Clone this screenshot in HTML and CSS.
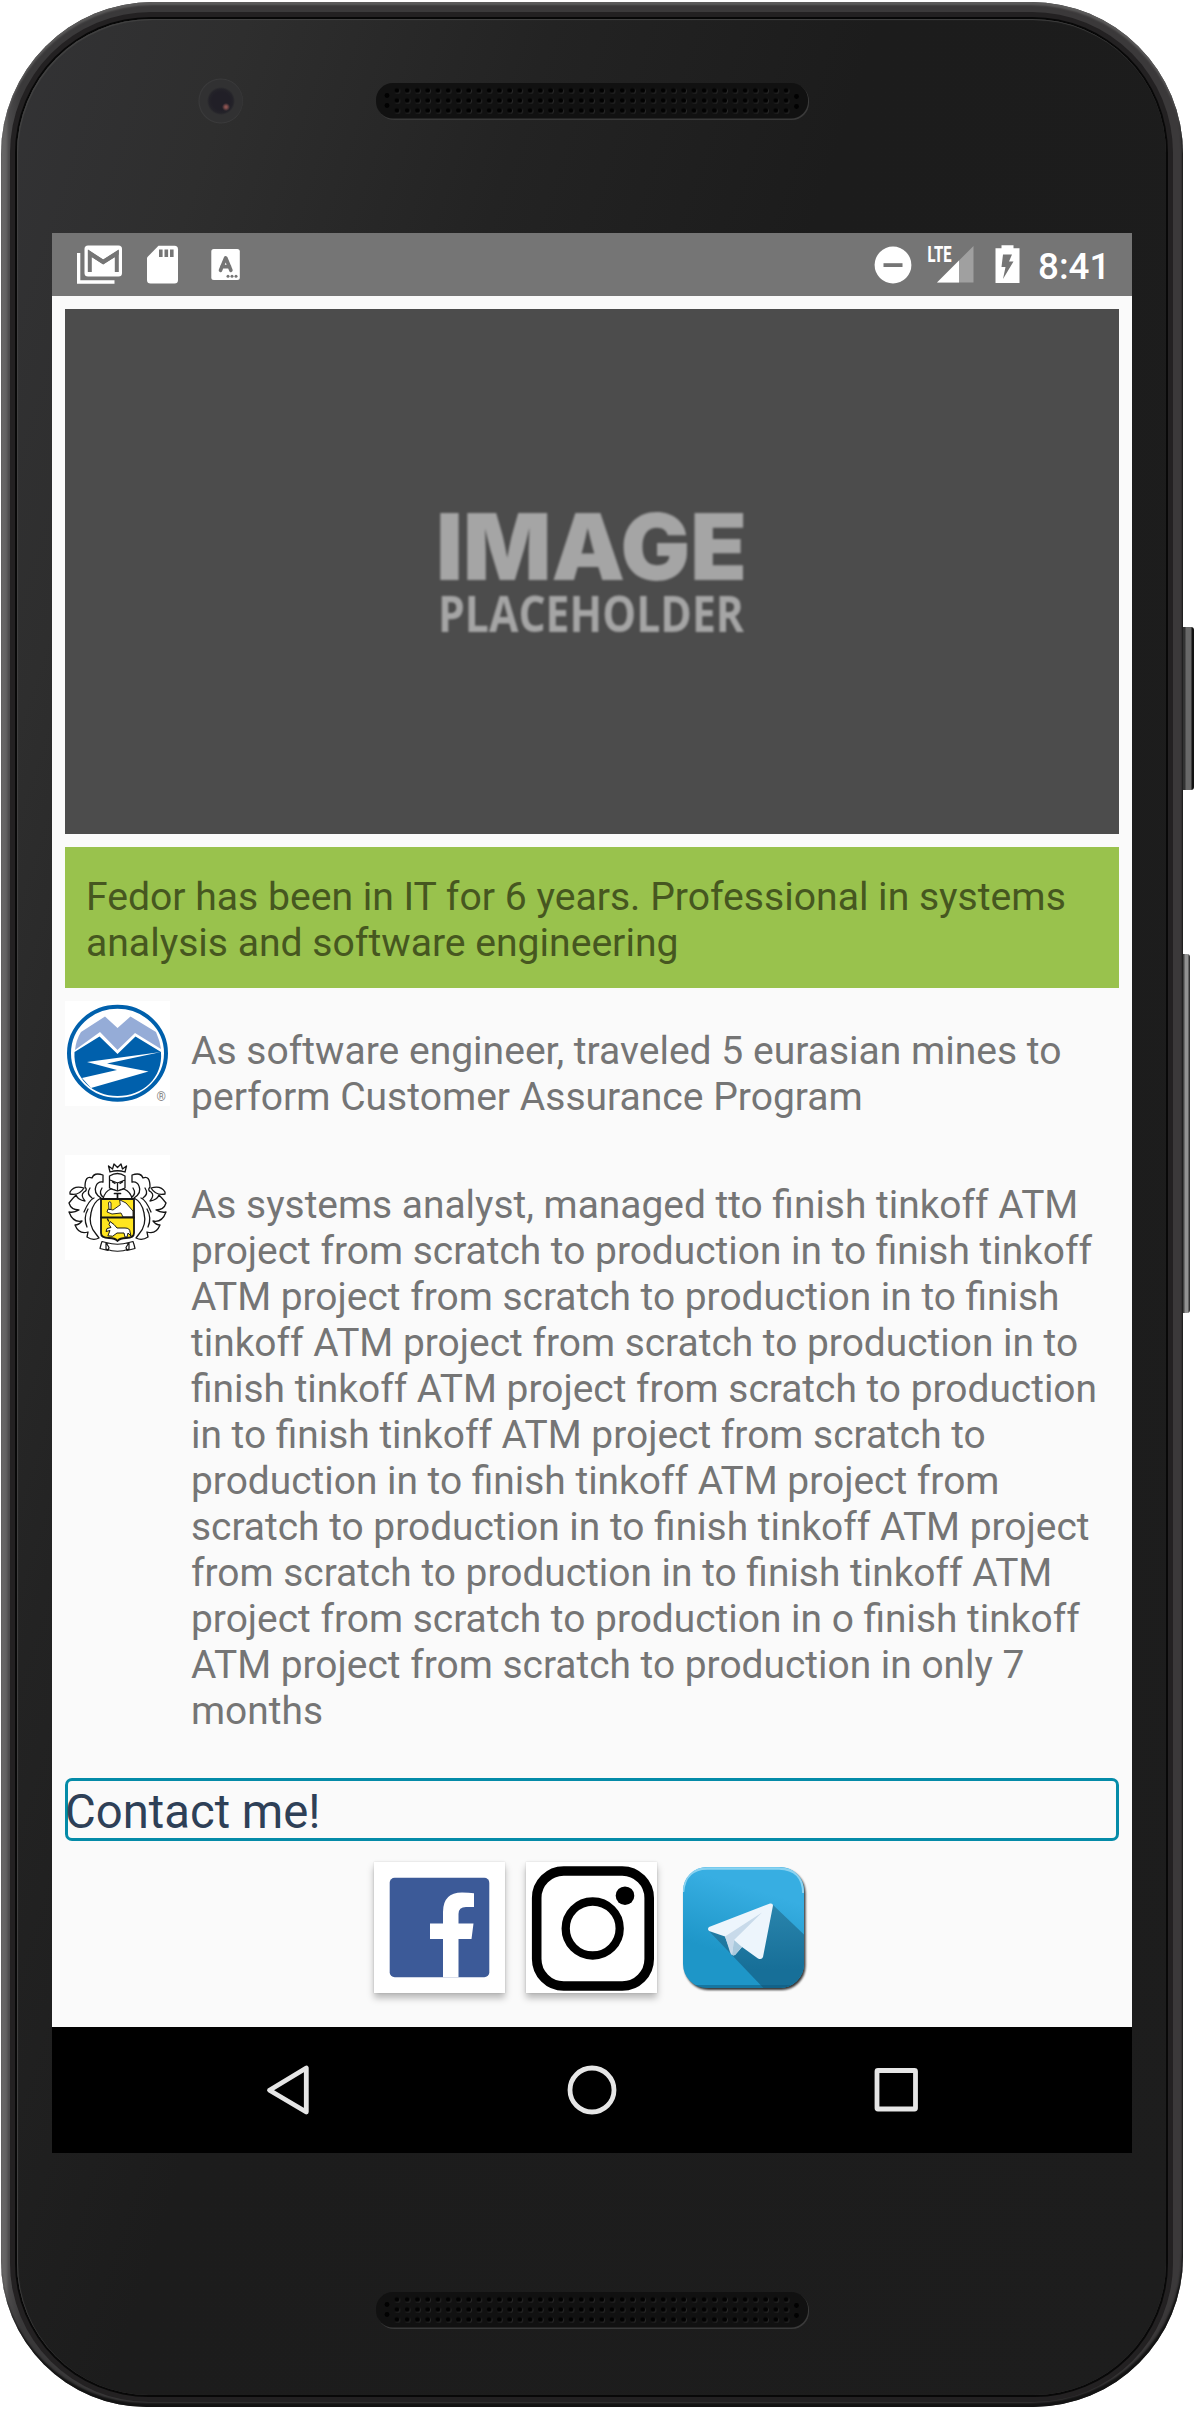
FILE: index.html
```html
<!DOCTYPE html>
<html lang="en">
<head>
<meta charset="utf-8">
<title>Fedor – profile</title>
<link rel="stylesheet" href="styles.css">
</head>
<body>
<svg class="defs" width="0" height="0" aria-hidden="true">
  <defs>
    <pattern id="holes" x="15.9" y="2.6" width="10.24" height="10" patternUnits="userSpaceOnUse">
      <circle cx="5.6" cy="5.4" r="2.7" fill="#2c2c2c"/>
      <circle cx="5.1" cy="4.9" r="2.4" fill="#020202"/>
    </pattern>
    <symbol id="grille" viewBox="0 0 433 37">
      <rect x="1" y="1" width="432" height="36" rx="17" fill="#3a3a3a"/>
      <rect x="0" y="0" width="432" height="35.5" rx="17" fill="#111"/>
      <rect x="15.9" y="2.6" width="399.4" height="30" fill="url(#holes)"/>
      <g fill="#020202"><circle cx="11" cy="12.5" r="2.4"/><circle cx="11" cy="22.5" r="2.4"/><circle cx="420.5" cy="13.5" r="2.4"/><circle cx="420.5" cy="23.5" r="2.4"/></g>
    </symbol>
  </defs>
</svg>
<div class="phone">
  <span class="key key-power"></span>
  <span class="key key-volume"></span>
  <div class="glass">
    <header class="bezel bezel-top">
      <span class="camera"></span>
      <svg class="speaker"><use href="#grille"/></svg>
    </header>

    <div class="screen">
      <div class="statusbar">
        <div class="notifications">
          <svg width="46" height="40" viewBox="77 245 46 40">
            <path d="M78.5 253v29h36" fill="none" stroke="#fff" stroke-width="3.6"/>
            <rect x="84.500" y="245.500" width="37.500" height="31" rx="3.500" fill="#fff"/>
            <path d="M89.800 272v-18.500L103.200 262l13.600-8.500V272" fill="none" stroke="#757575" stroke-width="4"/>
            <path d="M88 249.500l15.200 10 15.500-10v5L103.200 264.500 88 254.500z" fill="#757575"/>
          </svg>
          <svg width="32" height="40" viewBox="147 245 32 40">
            <path d="M158.500 245.700H174.500a3.500 3.500 0 0 1 3.500 3.500V280a3.500 3.500 0 0 1-3.500 3.500H150.500A3.500 3.500 0 0 1 147 280V257.500z" fill="#fff"/>
            <path d="M159 249.500h3.600v7.500H159zM164.500 249.500h3.600v7.500h-3.600zM170 249.500h3.600v7.500H170z" fill="#757575"/>
          </svg>
          <svg width="30" height="40" viewBox="211 245 30 40">
            <rect x="211.300" y="249" width="28.500" height="31" rx="2.500" fill="#fff"/>
            <path d="M220.500 270.300l5.200-12.500 5.200 12.500M221.800 266.600h7.800" fill="none" stroke="#757575" stroke-width="3.600" stroke-linecap="round" stroke-linejoin="round"/>
            <g fill="#757575"><circle cx="228" cy="276.300" r="1.500"/><circle cx="232" cy="276.300" r="1.500"/><circle cx="236" cy="276.300" r="1.500"/></g>
          </svg>
        </div>
        <div class="system">
          <svg width="38" height="40" viewBox="874 245 38 40">
            <circle cx="893" cy="265" r="18.400" fill="#fff"/><rect x="883.500" y="263.200" width="19" height="3.800" fill="#757575"/>
          </svg>
          <svg class="signal" width="48" height="40" viewBox="927 245 48 40">
            <path d="M973.500 246v36.500H937z" fill="#a0a0a0"/><path d="M959 260.500v22H937z" fill="#fff"/>
            <text class="lte" x="927.500" y="262" textLength="24" lengthAdjust="spacingAndGlyphs">LTE</text>
          </svg>
          <svg width="25" height="40" viewBox="994.500 245 25 40">
            <path d="M1001 245.300h12v3h6V283h-24v-34.700h6z" fill="#fff"/>
            <path d="M1002.500 254.500h9l-3 7h4.500l-10.500 17.500 2.500-12h-4z" fill="#757575"/>
          </svg>
          <time class="clock">8:41</time>
        </div>
      </div>

      <main class="page">
        <svg class="hero" viewBox="0 0 1054 525" role="img">
          <text class="hero-title" x="371" y="270.500" textLength="311" lengthAdjust="spacingAndGlyphs">IMAGE</text>
          <text class="hero-sub" x="373" y="323" textLength="306" lengthAdjust="spacingAndGlyphs">PLACEHOLDER</text>
        </svg>

        <p class="summary">Fedor has been in IT for 6 years. Professional in systems<br>analysis and software engineering</p>

        <section class="job job-first">
          <svg class="logo" viewBox="0 0 105 105">
            <rect width="105" height="105" fill="#fff"/>
            <ellipse cx="52.500" cy="52.300" rx="48.500" ry="46.500" fill="#fff" stroke="#0060ac" stroke-width="4"/>
            <path d="M10 49Q11 39 16 31L40 15.500 52.500 27 65.500 15.500 91 31Q95 40 96 48L70 32 52.500 49 35 31z" fill="#95acd7"/>
            <path d="M9.500 51L34.500 35.500 52.500 53 70.500 35.500 96 51C98 77 78 95 52.500 95 28 95 8 77 9.500 51z" fill="#0060ac"/>
            <path d="M96 51L42 62.500 83.500 70.500 26 87 17 77 52 69 22 61z" fill="#fff"/>
            <text class="reg" x="91.500" y="99.500">®</text>
          </svg>
          <p>As software engineer, traveled 5 eurasian mines to<br>perform Customer Assurance Program</p>
        </section>

        <section class="job job-second">
          <svg class="logo" viewBox="0 0 105 105">
            <rect width="105" height="105" fill="#fff"/>
            <g fill="#fff" stroke="#151515" stroke-width="1.300" stroke-linejoin="round" stroke-linecap="round">
              <g id="leaf">
                <path d="M38 20Q29 17 27 23Q20 20 20 32Q23 35 19 37Q15 40 20 46Q13 45 11 40Q8 43 4 48Q6 55 14 55Q9 58 4 57Q8 68 17 66Q14 70 10 70Q14 80 23 77L22 82Q28 86 34 83L31 79Q23 70 26 58Q28 47 36 43Q28 38 31 31Q33 26 38 27z"/>
                <path d="M5 37Q9 30 19 33Q14 41 5 39z"/>
                <path d="M19 57q5-12 10-14M22 72q-4-9 1-18M25 33q-4 6 2 10M37 33Q33 39 39 43" fill="none"/>
              </g>
              <use href="#leaf" transform="matrix(-1 0 0 1 105 0)"/>
              <path d="M45 17L43.500 11l4 3L49 9l3.500 3.500L56 9l1.500 5 4-3L60 17Q52.500 14.500 45 17z"/>
              <path d="M44.500 21Q52.500 16 60 21V33L52.500 36 44.500 33zM45 25l7.500 3 7.500-3M52.500 28v8M47.500 27l2.500 1.500M55 28.500l2.500-1.500"/>
              <path d="M38 44Q40 36 46 34L52.500 36 59 34Q66 37 67 44z"/>
              <path d="M49.500 38.500h6M52.500 38.500v5" stroke-width="1.700"/>
              <path d="M36 44H69V78Q69 83 61 83Q55 83 52.500 86Q50 83 44 83Q36 83 36 78z" fill="#ffe51f" stroke-width="1.800"/>
              <path d="M55 45l6 3 7 8v6H58l-2-4-9 1-5-2 1-3 5 1 7-5z" stroke-width=".9"/>
              <path d="M44 54L43.500 47.500Q45.500 45.500 46 48V54z" stroke-width=".9"/>
              <path d="M36 62.500H69" stroke-width="1.800"/>
              <path d="M43 80.500l2-5-4 1 1-3 4-1-2-3 1-3 4 3 3 3.500h8q5 0 5 4l1 4-3-3-1 4h-2l-1-4h-7l-4 3z" stroke-width="1"/>
              <path d="M43.500 66l-1-2" fill="none"/>
              <path d="M41 87.500l-4-1-1 3-1 4 8 2 1-3zM64 87.500l4-1 1 3 1 4-8 2-1-3zM41 87.500Q52.500 91 64 87.500V94Q52.500 98.500 41 94z" stroke-width="1.200"/>
            </g>
          </svg>
          <p>As systems analyst, managed tto finish tinkoff ATM<br>project from scratch to production in to finish tinkoff<br>ATM project from scratch to production in to finish<br>tinkoff ATM project from scratch to production in to<br>finish tinkoff ATM project from scratch to production<br>in to finish tinkoff ATM project from scratch to<br>production in to finish tinkoff ATM project from<br>scratch to production in to finish tinkoff ATM project<br>from scratch to production in to finish tinkoff ATM<br>project from scratch to production in o finish tinkoff<br>ATM project from scratch to production in only 7<br>months</p>
        </section>

        <h2 class="contact">Contact me!</h2>

        <nav class="social">
          <a class="tile"><svg width="131" height="131" viewBox="0 0 131 131">
            <rect x="15.700" y="15.700" width="99.600" height="99.600" rx="5" fill="#3c5a98"/>
            <path d="M69 115.300V77H56V61.500H69V50Q69 30.500 88 30.500Q95 30.500 100 31.300V45H92Q84.500 45 84.500 52V61.500H99.500L97.500 77H84.500V115.300z" fill="#fff"/>
          </svg></a>
          <a class="tile"><svg width="131" height="131" viewBox="0 0 131 131">
            <rect x="10.700" y="9" width="112.500" height="115" rx="27" fill="#fff" stroke="#000" stroke-width="9.600"/>
            <circle cx="66.700" cy="66.500" r="27" fill="none" stroke="#000" stroke-width="8.300"/>
            <circle cx="99" cy="33.700" r="9.300"/>
          </svg></a>
          <a class="tile tile-bare"><svg width="131" height="131" viewBox="0 0 131 131">
            <defs>
              <linearGradient id="sky" x1=".7" y1="0" x2=".4" y2="1"><stop offset=".2" stop-color="#37aee2"/><stop offset=".75" stop-color="#1e96c8"/></linearGradient>
              <linearGradient id="shade" x1="0" y1="0" x2="0" y2="1"><stop offset="0" stop-color="#2a85ad"/><stop offset=".7" stop-color="#176f98"/></linearGradient>
              <clipPath id="badge"><rect x="5" y="5" width="121" height="121" rx="24"/></clipPath>
            </defs>
            <rect class="badge-shadow" x="6.500" y="7" width="121" height="121" rx="24" fill="#333"/>
            <g clip-path="url(#badge)">
              <rect x="5" y="5" width="121" height="121" fill="url(#sky)"/>
              <path d="M30 68L94 42 135 81V135H94z" fill="url(#shade)"/>
              <path d="M5 123h121v4H5z" fill="#0d5579" opacity=".5"/>
              <path d="M5 30Q7 6 30 6.500H101Q125 7 125.300 31" fill="none" stroke="#8bd3f1" stroke-width="2.400"/>
            </g>
            <path d="M31 65Q29 67 31 69L47 74.500 54 92.500Q55 94 57 93L64 85 80 96.500Q84 98 85 95L95 43.500Q95 41 92 41.500z" fill="#edf5fc"/>
            <path d="M47 74.500L84 50.500 56 78 54 93Q53 93 52 90z" fill="#c8daea"/>
            <path d="M56 78L64 85 57 93H54z" fill="#a9c9dd"/>
          </svg></a>
        </nav>
      </main>

      <div class="navbar">
        <svg width="50" height="56" viewBox="262 2062 50 56"><path d="M306.300 2068V2112L269.500 2090.300z"/></svg>
        <svg width="56" height="56" viewBox="564 2062 56 56"><circle cx="592" cy="2090" r="22"/></svg>
        <svg width="50" height="56" viewBox="871 2062 50 56"><rect x="877" y="2070.500" width="38.500" height="38.500" rx="1"/></svg>
      </div>
    </div>

    <footer class="bezel bezel-bottom">
      <svg class="speaker"><use href="#grille"/></svg>
    </footer>
  </div>
</div>
</body>
</html>
```
FILE: styles.css
```css
* { box-sizing: border-box; }
body { margin: 0; background: #fff; font-family: Roboto, "Noto Sans", sans-serif; }
p, h2 { margin: 0; font-weight: 400; }
.defs { position: absolute; }
svg { display: block; flex: none; }

/* device body */
.phone {
  position: relative;
  width: 1182px;
  height: 2405px;
  margin: 2px 0 2px 1px;
  padding: 17px 17px 12px 16px;
  border-radius: 152px 152px 150px 146px;
  background: linear-gradient(90deg, #6b6a6a 0, #626161 5px, #4a494a 8px, #3a393a 20px, #3b393a 100%);
  box-shadow: inset -1px -4px 2px #131313, inset 0 3px 2px #5c5b5b;
}
.glass {
  width: 1149px;
  height: 2376px;
  border-radius: 134px 134px 132px 132px;
  background: linear-gradient(108deg, #333335 0, #2e2e2e 12%, #232323 28%, #1c1c1c 45%, #1d1d1d 100%);
  box-shadow: 0 0 0 2px #080808, 0 0 0 7px #232122, inset 1px 1px 1px #434343;
}
.key { position: absolute; left: 1182px; border-radius: 0 3px 3px 0; }
.key-power { top: 625px; width: 11px; height: 163px; background: linear-gradient(90deg, #333 0 2px, #686868 3px 8px, #111 9px); }
.key-volume { top: 952px; width: 7px; height: 359px; background: linear-gradient(90deg, #444 0 1px, #929292 2px 5px, #333 6px); }

/* bezels */
.bezel { display: flex; justify-content: center; }
.bezel-top { height: 214px; padding: 64px 0 0; }
.bezel-bottom { height: 242px; padding-top: 139px; }
.speaker { width: 433px; height: 37px; margin-left: 1px; }
.camera {
  width: 46px; height: 46px; margin: -5px 132px 0 -178px; border-radius: 50%;
  background: radial-gradient(circle at 29px 29px, #8a5250 0 1px, transparent 4px),
    radial-gradient(circle at 24px 23px, #211f27 0 9px, #242329 12px, #313132 14px 21px, #3a3a3b 22px, transparent 23px);
}

/* screen */
.screen { display: flex; flex-direction: column; width: 1080px; height: 1920px; margin-left: 35px; background: #fafafa; }
.statusbar { display: flex; justify-content: space-between; height: 63px; padding: 12px 26px 0 25px; background: #757575; color: #fff; }
.notifications { display: flex; }
.notifications svg + svg { margin-left: 24px; }
.notifications svg + svg + svg { margin-left: 32px; }
.system { display: flex; gap: 15px; }
.system svg:nth-child(3) { margin-left: 5px; }
.signal { overflow: visible; }
.lte { font: 800 22px Roboto, sans-serif; fill: #fff; }
.clock { width: 68px; margin-left: 3px; font-size: 36.75px; font-weight: 500; line-height: 43px; }

.page { flex: 1; display: flex; flex-direction: column; padding: 13px 13px 0; }
.hero { width: 1054px; height: 525px; background: #4c4c4c; }
.hero text { fill: #a5a5a5; filter: blur(.8px); }
.hero-title { font: 900 92px Inter, sans-serif; }
.hero-sub { font: 700 51px "Open Sans", sans-serif; }
.summary {
  height: 141px; margin-top: 13px; padding: 27px 21px 0;
  background: #99c24d; color: #465720;
  font-size: 39.12px; line-height: 46px; white-space: nowrap;
}
.job { display: flex; gap: 21px; color: #757575; line-height: 46px; white-space: nowrap; }
.job p { padding-top: 27px; }
.job-first { height: 154px; margin-top: 13px; font-size: 39.05px; }
.job-second { height: 623px; font-size: 38.9px; }
.logo { width: 105px; height: 105px; }
.reg { font-size: 12px; fill: #888; }
.contact {
  height: 63px; border: 3px solid #048ba8; border-radius: 7px;
  color: #2e4057; font-size: 47.25px; line-height: 63px; text-indent: -3px;
}
.social { display: flex; justify-content: center; gap: 21px; margin-top: 21px; padding-right: 2px; }
.tile { width: 131px; height: 131px; background: #fff; box-shadow: 0 5px 7px rgba(0,0,0,.27), 0 0 2px rgba(0,0,0,.14); }
.tile-bare { background: none; box-shadow: none; }
.badge-shadow { filter: blur(1.2px); }

.navbar { display: flex; align-items: flex-start; height: 126px; padding: 35px 211px 0 210px; justify-content: space-between; background: #000; }
.navbar svg { fill: none; stroke: #e6e6e6; stroke-width: 4.8; stroke-linejoin: round; }
```
